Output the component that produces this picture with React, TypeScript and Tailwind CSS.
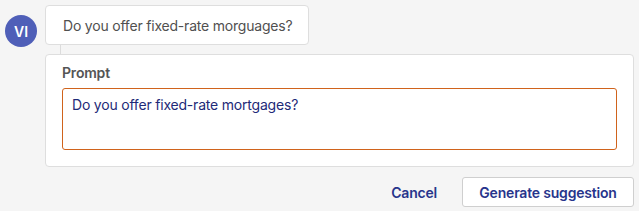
import React from "react";

export default function App() {
  return (
    <div
      className="w-[639px] h-[211px] bg-[#f5f5f5] pt-[5px] overflow-hidden tracking-[-0.2px]"
      style={{ fontFamily: "Inter, 'Noto Sans', sans-serif" }}
    >
      <div className="flex">
        <div className="w-[45px] pl-[5px] pt-[10px] shrink-0">
          <div className="w-[32px] h-[32px] rounded-full bg-[#4f5fb8] flex items-center justify-center text-white text-[14px] font-semibold tracking-normal">
            VI
          </div>
        </div>
        <div className="flex-1 pr-[5px] flex flex-col">
          <div className="w-[264px] h-[40px] bg-white border border-[#dedede] rounded-[4px] pl-[17px] flex items-center text-[14px] text-[#505050]">
            Do you offer fixed-rate morguages?
          </div>
          <div className="ml-[15px] w-px h-[9px] bg-[#dcdcdc]" />
          <div className="bg-white border border-[#dedede] rounded-[4px] px-[16px] pt-[8px] pb-[16px]">
            <div className="text-[14px] font-semibold text-[#555] leading-[20px] mb-[5px]">
              Prompt
            </div>
            <div className="h-[62px] border border-[#d0631c] rounded-[3px] pl-[9px] pt-[5px] text-[14px] text-[#1e2a78]">
              Do you offer fixed-rate mortgages?
            </div>
          </div>
        </div>
      </div>
      <div className="flex justify-end items-center mt-[10px] pr-[5px]">
        <button className="h-[30px] px-[12px] mr-[13px] text-[14px] font-semibold text-[#27358c]">
          Cancel
        </button>
        <button className="h-[30px] w-[172px] bg-white border border-[#cfcfcf] rounded-[3px] text-[14px] font-semibold text-[#27358c]">
          Generate suggestion
        </button>
      </div>
    </div>
  );
}
